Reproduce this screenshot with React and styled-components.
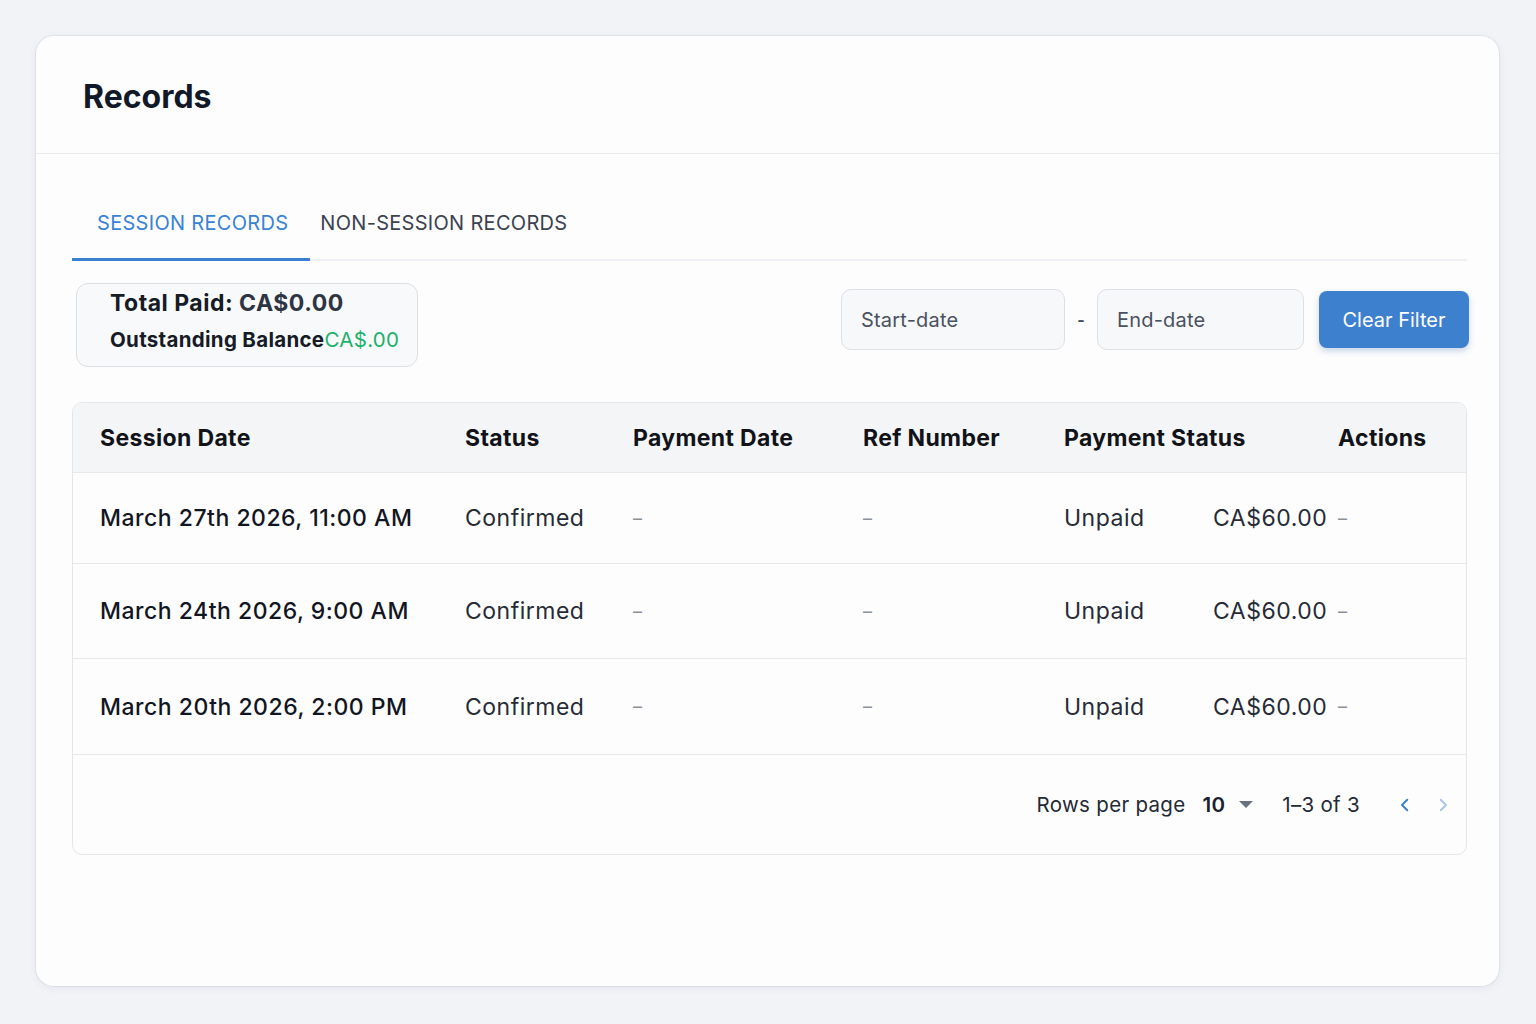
import React from "react";
import styled, { createGlobalStyle } from "styled-components";

const Global = createGlobalStyle`
  html, body { margin: 0; padding: 0; }
  body {
    background: #f1f3f7;
    font-family: Inter, "Noto Sans", "Liberation Sans", sans-serif;
    -webkit-font-smoothing: antialiased;
  }
`;

const Page = styled.div`
  padding: 36px 37px 38px 36px;
  min-height: 1024px;
  box-sizing: border-box;
`;

const Card = styled.div`
  background: #fdfdfe;
  border-radius: 18px;
  box-shadow: 0 2px 10px rgba(30, 40, 70, 0.06), 0 0 0 1px rgba(220, 224, 232, 0.6);
  height: 950px;
  display: flex;
  flex-direction: column;
`;

const Header = styled.div`
  height: 118px;
  box-sizing: border-box;
  display: flex;
  align-items: center;
  padding: 4px 0 0 47px;
  border-bottom: 1px solid #e8eaee;
`;

const Title = styled.h1`
  margin: 0;
  font-size: 32px;
  font-weight: 700;
  color: #111827;
  letter-spacing: 0px;
`;

const Body = styled.div`
  padding: 32px 32px 0 36px;
  display: flex;
  flex-direction: column;
`;

const TabBar = styled.div`
  display: flex;
  border-bottom: 2px solid #eef0f3;
  height: 73px;
`;

const Tab = styled.div`
  position: relative;
  display: flex;
  align-items: center;
  padding: 0 ${(p) => p.$pr}px 0 ${(p) => p.$pl}px;
  font-size: 20px;
  letter-spacing: 0.3px;
  color: ${(p) => (p.$active ? "#3a83d3" : "#3c4350")};
  &::after {
    content: "";
    position: absolute;
    left: 0;
    right: 0;
    bottom: -2px;
    height: 3px;
    background: ${(p) => (p.$active ? "#3a80cf" : "transparent")};
  }
`;

const Toolbar = styled.div`
  display: flex;
  justify-content: space-between;
  align-items: flex-start;
  margin-top: 22px;
  padding-left: 4px;
`;

const Summary = styled.div`
  border: 1px solid #dcdfe4;
  background: #f8f9fa;
  border-radius: 12px;
  padding: 4px 18px 11px 33px;
  display: flex;
  flex-direction: column;
  gap: 7px;
`;

const SummaryLine = styled.div`
  font-size: ${(p) => p.$size}px;
  letter-spacing: ${(p) => p.$ls}px;
  font-weight: 700;
  color: #161b26;
  line-height: 30px;
  white-space: nowrap;
`;

const Muted = styled.span`
  color: #2d3442;
`;

const Green = styled.span`
  color: #1bb26a;
  font-weight: 400;
`;

const Filters = styled.div`
  display: flex;
  align-items: center;
  padding-top: 6px;
  margin-right: -2px;
`;

const DateInput = styled.div`
  width: ${(p) => p.$w}px;
  height: 61px;
  box-sizing: border-box;
  border: 1px solid #dde0e5;
  background: #f7f8fa;
  border-radius: 10px;
  display: flex;
  align-items: center;
  padding-left: 19px;
  font-size: 20px;
  letter-spacing: 0.2px;
  color: #4a5160;
`;

const Dash = styled.div`
  width: 32px;
  text-align: center;
  font-size: 16px;
  font-weight: 700;
  color: #4a5160;
`;

const Button = styled.button`
  margin-left: 15px;
  width: 150px;
  height: 57px;
  border: none;
  border-radius: 8px;
  background: #3d80cd;
  color: #fff;
  font-family: inherit;
  font-size: 20px;
  box-shadow: 0 3px 6px rgba(40, 90, 160, 0.25);
`;

const Table = styled.div`
  margin-top: 35px;
  border: 1px solid #e4e6ea;
  border-radius: 10px;
  overflow: hidden;
  background: #fdfdfe;
`;

const Grid = styled.div`
  display: grid;
  grid-template-columns: 365px 168px 230px 201px 149px 125px 1fr;
  padding-left: 27px;
  box-sizing: border-box;
  align-items: center;
  height: ${(p) => p.$h}px;
  background: ${(p) => (p.$head ? "#f4f5f7" : "transparent")};
  border-bottom: 1px solid #e7e9ec;
`;

const Th = styled.div`
  font-size: 23px;
  letter-spacing: 0.35px;
  font-weight: 700;
  color: #111318;
  grid-column: span ${(p) => p.$span || 1};
  white-space: nowrap;
`;

const Td = styled.div`
  font-size: 23px;
  letter-spacing: 0.5px;
  color: ${(p) => (p.$strong ? "#121622" : "#262b35")};
  font-weight: ${(p) => (p.$strong ? 500 : 400)};
  white-space: nowrap;
`;

const Empty = styled.div`
  font-size: 18px;
  color: #8c9098;
`;

const Footer = styled.div`
  height: 99px;
  display: flex;
  align-items: center;
  justify-content: flex-end;
  padding-right: 14px;
  font-size: 20.5px;
  letter-spacing: 0.3px;
  color: #242a35;
`;

const RowsLabel = styled.span`
  margin-right: 17px;
`;

const PerPage = styled.span`
  font-weight: 600;
  color: #1b2030;
  display: flex;
  align-items: center;
  gap: 14px;
  margin-right: 29px;
`;

const Caret = styled.span`
  width: 0;
  height: 0;
  border-left: 7px solid transparent;
  border-right: 7px solid transparent;
  border-top: 7px solid #6b7280;
`;

const Range = styled.span`
  margin-right: 36px;
`;

const Nav = styled.div`
  display: flex;
  gap: 20px;
  align-items: center;
`;

const Chevron = ({ dir, color }) => (
  <svg width="18" height="18" viewBox="0 0 24 24" fill="none" stroke={color} strokeWidth="2.6" strokeLinecap="round" strokeLinejoin="round">
    {dir === "left" ? <path d="M15 5l-7 7 7 7" /> : <path d="M9 5l7 7-7 7" />}
  </svg>
);

const rows = [
  { date: "March 27th 2026, 11:00 AM", h: 91 },
  { date: "March 24th 2026, 9:00 AM", h: 95 },
  { date: "March 20th 2026, 2:00 PM", h: 96 },
];

export default function App() {
  return (
    <>
      <Global />
      <Page>
        <Card>
          <Header>
            <Title>Records</Title>
          </Header>
          <Body>
            <TabBar>
              <Tab $active $pl={25} $pr={22}>SESSION RECORDS</Tab>
              <Tab $pl={10} $pr={10}>NON-SESSION RECORDS</Tab>
            </TabBar>
            <Toolbar>
              <Summary>
                <SummaryLine $size={23} $ls={0.5}>
                  Total Paid: <Muted>CA$0.00</Muted>
                </SummaryLine>
                <SummaryLine $size={20.5} $ls={0.3}>
                  Outstanding Balance<Green>CA$.00</Green>
                </SummaryLine>
              </Summary>
              <Filters>
                <DateInput $w={224}>Start-date</DateInput>
                <Dash>-</Dash>
                <DateInput $w={207}>End-date</DateInput>
                <Button>Clear Filter</Button>
              </Filters>
            </Toolbar>
            <Table>
              <Grid $head $h={70}>
                <Th>Session Date</Th>
                <Th>Status</Th>
                <Th>Payment Date</Th>
                <Th>Ref Number</Th>
                <Th $span={2}>Payment Status</Th>
                <Th>Actions</Th>
              </Grid>
              {rows.map((r) => (
                <Grid key={r.date} $h={r.h}>
                  <Td $strong>{r.date}</Td>
                  <Td>Confirmed</Td>
                  <Empty>–</Empty>
                  <Empty>–</Empty>
                  <Td>Unpaid</Td>
                  <Td>CA$60.00</Td>
                  <Empty>–</Empty>
                </Grid>
              ))}
              <Footer>
                <RowsLabel>Rows per page</RowsLabel>
                <PerPage>
                  10 <Caret />
                </PerPage>
                <Range>1–3 of 3</Range>
                <Nav>
                  <Chevron dir="left" color="#3a80cf" />
                  <Chevron dir="right" color="#a9c5e8" />
                </Nav>
              </Footer>
            </Table>
          </Body>
        </Card>
      </Page>
    </>
  );
}
